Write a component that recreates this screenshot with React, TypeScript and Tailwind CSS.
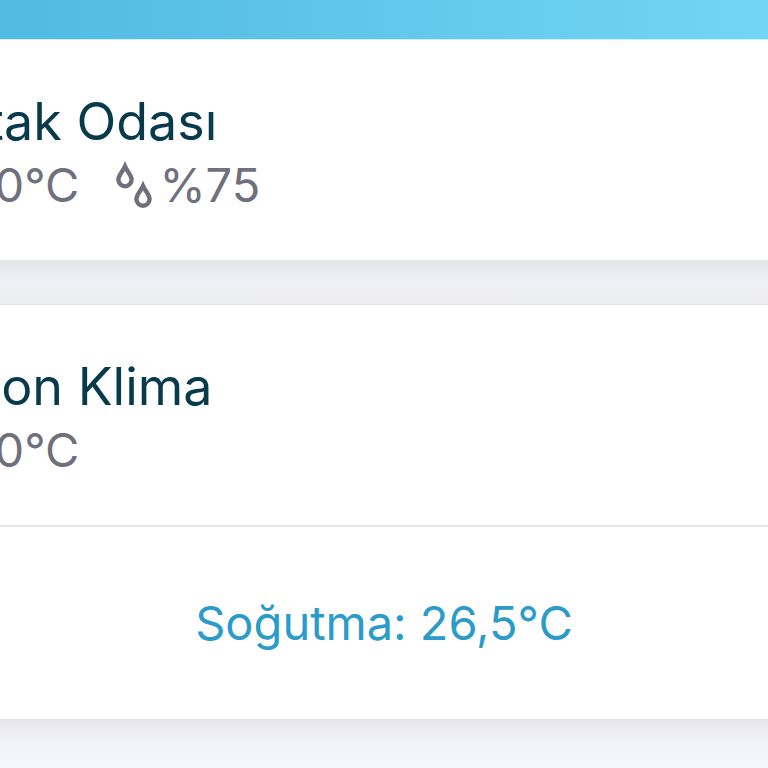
interface DeviceHeadProps {
  name: string;
  temperature: string;
  humidity?: string;
}

function DropsIcon() {
  return (
    <svg width="38" height="48" viewBox="0 0 38 48" fill="none" stroke="currentColor" strokeWidth="4.4" aria-hidden="true">
      <path d="M10 5.5C8 10 3.4 14.2 3.4 18.6a6.6 6.6 0 0 0 13.2 0C16.6 14.2 12 10 10 5.5Z" />
      <path d="M28 25C26 29.5 21.4 33.7 21.4 38.1a6.6 6.6 0 0 0 13.2 0C34.6 33.7 30 29.5 28 25Z" />
    </svg>
  );
}

function DeviceHead({ name, temperature, humidity }: DeviceHeadProps) {
  return (
    <div className="-ml-[74px] pt-12 pb-[46px]">
      <h2 className="whitespace-nowrap text-[52px] leading-[68px] text-[#073b4c]">{name}</h2>
      <div className="flex items-center whitespace-nowrap text-[47px] leading-[58px] text-[#706f7d]">
        <span>{temperature}</span>
        {humidity && (
          <span className="ml-9 flex items-center gap-1.5">
            <DropsIcon />
            {humidity}
          </span>
        )}
      </div>
    </div>
  );
}

export default function App() {
  return (
    <div className="min-h-screen overflow-hidden bg-[#f5f7fc] font-['Inter',sans-serif]">
      <header className="h-[39px] bg-linear-to-r from-[#50bae0] to-[#73d5f5]" />
      <main>
        <section className="border-t border-[#d3eef8] bg-white">
          <DeviceHead name="Yatak Odası" temperature="26,0°C" humidity="%75" />
        </section>

        {/* Gap shaded by the card above */}
        <div className="h-11 bg-linear-to-b from-[#e4e5e8] via-[#eff0f5] to-[#ededf1]" />

        <section className="border-t border-[#e2e3e6] bg-white">
          <DeviceHead name="Salon Klima" temperature="26,0°C" />
          <div className="border-t-2 border-[#e6e6e8] py-16 text-center">
            <p className="text-[47px] leading-[64px] text-[#2b9bc9]">Soğutma: 26,5°C</p>
          </div>
        </section>
        <div className="h-12 bg-linear-to-b from-[#e5e5ea] via-[#f3f4f9] to-[#f5f7fc]" />
      </main>
    </div>
  );
}
